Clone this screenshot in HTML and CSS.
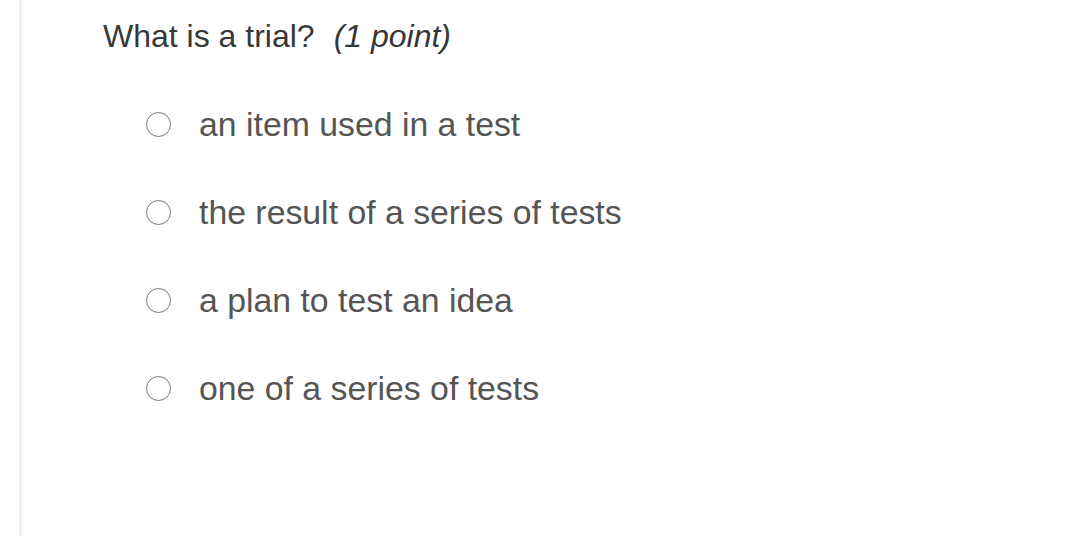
FILE: index.html
```html
<!DOCTYPE html>
<html>
<head>
<meta charset="utf-8">
<link rel="stylesheet" href="styles.css">
</head>
<body>
<div class="page">
  <div class="question">
    <p class="prompt">What is a trial?<span class="points">(1 point)</span></p>
    <ul class="options">
      <li class="option"><span class="radio"></span><span class="label">an item used in a test</span></li>
      <li class="option"><span class="radio"></span><span class="label">the result of a series of tests</span></li>
      <li class="option"><span class="radio"></span><span class="label">a plan to test an idea</span></li>
      <li class="option"><span class="radio"></span><span class="label">one of a series of tests</span></li>
    </ul>
  </div>
</div>
</body>
</html>
```
FILE: styles.css
```css
html, body {
  margin: 0;
  padding: 0;
  background: #fff;
  height: 100%;
}
.page {
  margin-left: 19px;
  border-left: 3px solid #f2f2f2;
  min-height: 100%;
  box-sizing: border-box;
  font-family: "Liberation Sans", Arial, sans-serif;
}
.question {
  padding-left: 81px;
  padding-top: 16px;
}
.prompt {
  margin: 0;
  font-size: 32px;
  line-height: 40px;
  color: #383838;
}
.points {
  font-style: italic;
  margin-left: 19px;
}
.options {
  list-style: none;
  margin: 0;
  padding: 46px 0 0 43px;
}
.option {
  display: flex;
  align-items: center;
  height: 44px;
  margin-bottom: 44px;
}
.radio {
  width: 23px;
  height: 23px;
  border: 1px solid #777;
  border-radius: 50%;
  flex: none;
}
.label {
  margin-left: 28px;
  font-size: 33.8px;
  color: #555;
}
```
